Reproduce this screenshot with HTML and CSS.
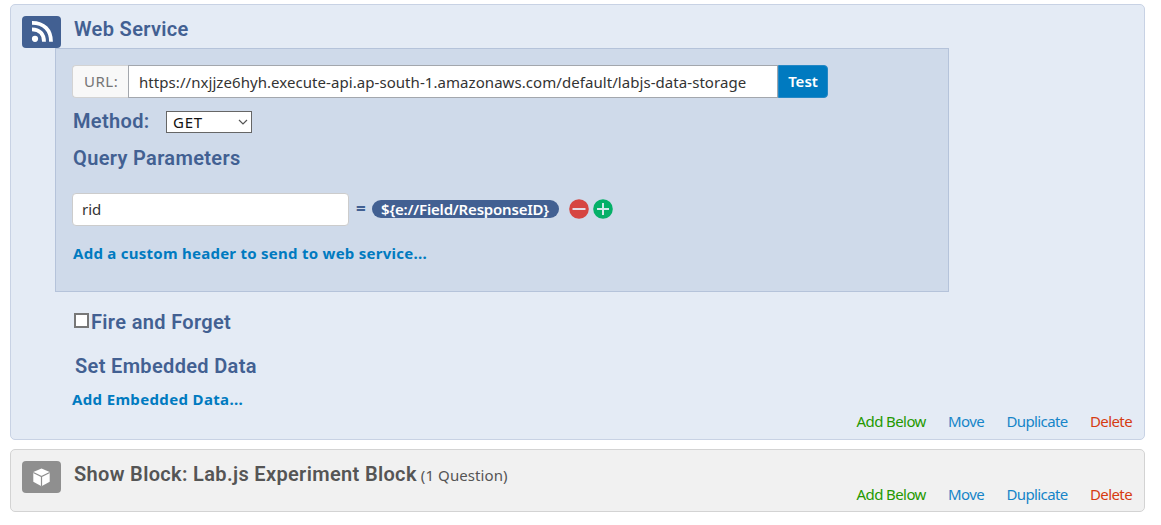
FILE: index.html
```html
<!DOCTYPE html>
<html lang="en">
<head>
<meta charset="utf-8">
<title>Survey Flow</title>
<link rel="stylesheet" href="styles.css">
</head>
<body>
<main class="flow">
  <section class="block service">
    <header class="block-head">
      <span class="tile"><svg width="39" height="32" viewBox="0 0 39 32" fill="none" stroke="#fff"><circle cx="13" cy="22.8" r="3.1" fill="#fff" stroke="none"/><path d="M10 13.4C17.5 13.4 22 18 22 25.8M10 6.9C22 6.9 29 14 29 25.8" stroke-width="3.8"/></svg></span>
      <h2 class="title t-service">Web Service</h2>
    </header>
    <div class="panel">
      <div class="url-row">
        <label class="url-label">URL:</label>
        <div class="url-field"><span class="url-text">https://nxjjze6hyh.execute-api.ap-south-1.amazonaws.com/default/labjs-data-storage</span></div>
        <button class="test">Test</button>
      </div>
      <div class="method-row">
        <h3 class="title t-method">Method:</h3>
        <div class="select"><span>GET</span><svg width="10" height="6" viewBox="0 0 10 6" fill="none" stroke="#555" stroke-width="1.2"><path d="M1 1l4 4 4-4"/></svg></div>
      </div>
      <h3 class="title t-query">Query Parameters</h3>
      <div class="param-row">
        <div class="param">rid</div>
        <span class="equals">=</span>
        <span class="pill"><span class="pill-text">${e://Field/ResponseID}</span></span>
        <svg class="minus" width="20" height="20" viewBox="0 0 20 20"><circle cx="10" cy="10" r="9.8" fill="#d64541"/><path d="M3.5 10h13" stroke="#e3dce5" stroke-width="2"/></svg>
        <svg class="plus" width="20" height="20" viewBox="0 0 20 20"><circle cx="10" cy="10" r="9.8" fill="#05b068"/><path d="M4 10h12M10 4v12" stroke="#d5e8ea" stroke-width="2"/></svg>
      </div>
      <a class="link l-header">Add a custom header to send to web service...</a>
    </div>
    <div class="fire-row"><span class="check"></span><h3 class="title t-fire">Fire and Forget</h3></div>
    <h3 class="title t-embed">Set Embedded Data</h3>
    <a class="link l-embed">Add Embedded Data...</a>
    <nav class="actions"><a class="add">Add Below</a><a class="move">Move</a><a class="dup">Duplicate</a><a class="del">Delete</a></nav>
  </section>
  <section class="block show">
    <header class="block-head">
      <span class="tile"><svg width="39" height="32" viewBox="0 0 39 32"><path d="M19.5 7.5l8.2 3.4v9.8l-8.2 4.5-8.2-4.5v-9.8z" fill="#fff"/><path d="M11.3 11.5l8.2 4 8.2-4M19.5 15.5v9.8" fill="none" stroke="#8f8f8f" stroke-width="1.2"/></svg></span>
      <h2 class="title t-show">Show Block: Lab.js Experiment Block</h2>
      <span class="count">(1 Question)</span>
    </header>
    <nav class="actions"><a class="add">Add Below</a><a class="move">Move</a><a class="dup">Duplicate</a><a class="del">Delete</a></nav>
  </section>
</main>
</body>
</html>
```
FILE: styles.css
```css
* { box-sizing: border-box; }
body { margin: 0; background: #fff; font-family: "Noto Sans", "Open Sans", sans-serif; font-size: 15px; color: #333; }
h2, h3 { margin: 0; }
.flow { padding: 4px 16px 0 10px; display: flex; flex-direction: column; gap: 9px; }
.block { border: 1px solid #c8d2e4; border-radius: 5px; }
.service { height: 436px; background: #e4ebf5; color: #426092; }
.show { height: 63px; background: #f1f1f1; border-color: #d3d3d3; color: #555; }
.block-head { display: flex; height: 43px; padding: 11px 0 0 11px; white-space: nowrap; }
.tile { width: 39px; height: 32px; margin-right: 13px; border-radius: 4px; background: #426092; overflow: hidden; flex: none; }
.tile svg { display: block; }
.show .tile { background: #8f8f8f; }
.title { font-family: Roboto, sans-serif; font-size: 20px; font-weight: 600; line-height: 26px; letter-spacing: .34px; white-space: nowrap; }
.panel { width: 894px; height: 244px; margin-left: 44px; padding: 16px 0 0 17px; background: #cfdaea; border: 1px solid #b5c3da; }
.url-row { display: flex; height: 33px; white-space: nowrap; }
.url-label { width: 56px; margin-left: -1px; padding-left: 11px; line-height: 31px; letter-spacing: .5px; color: #757575; background: #f8f8f8; border: 1px solid #d3d3d3; border-right: 0; border-radius: 4px 0 0 4px; }
.url-field { width: 650px; padding-left: 10px; line-height: 32px; letter-spacing: .06px; color: #333; background: #fff; border: 1px solid #a3a7ad; }
.test { width: 50px; padding: 0 0 1px; font: 600 15px "Noto Sans", sans-serif; color: #fff; background: #007ac0; border: 1px solid #2588c5; border-radius: 0 4px 4px 0; }
.method-row { display: flex; height: 43px; padding-top: 10px; }
.t-method { width: 93px; }
.select { display: flex; align-items: center; justify-content: space-between; width: 86px; height: 22px; margin-top: 3px; padding: 0 3px 0 6px; letter-spacing: .8px; color: #111; background: #fff; border: 1px solid #666; }
.t-query { padding-top: 4px; }
.param-row { display: flex; align-items: center; height: 33px; margin-top: 22px; margin-left: -1px; }
.param { width: 277px; height: 33px; padding-left: 9px; line-height: 31px; color: #333; background: #fff; border: 1px solid #ccc; border-radius: 4px; }
.equals { width: 23px; margin-top: -2px; padding-left: 7px; font-size: 17px; font-weight: 700; }
.pill { width: 187px; height: 18px; margin-top: -1px; padding-left: 9px; line-height: 18px; font-weight: 600; letter-spacing: -.2px; color: #fff; background: #426092; border-radius: 9px; white-space: nowrap; }
.minus { margin: -2px 4px 0 10px; }
.plus { margin-top: -2px; }
.link { display: block; font-size: 15px; font-weight: 700; line-height: 20px; color: #007ac0; white-space: nowrap; }
.l-header { margin-top: 17px; letter-spacing: .26px; }
.fire-row { display: flex; height: 26px; margin: 17px 0 0 63px; }
.check { width: 15px; height: 15px; margin: 4px 2px 0 0; background: #fff; border: 2px solid #777; }
.t-embed { margin: 18px 0 0 64px; }
.l-embed { margin: 10px 0 0 61px; letter-spacing: .35px; }
.actions { display: flex; justify-content: flex-end; gap: 22.3px; padding-right: 12px; font: 15px/20px "Noto Sans", sans-serif; letter-spacing: -.6px; }
.service .actions { margin-top: 2px; }
.show .actions { margin-top: -9px; }
.add { color: #259900; }
.move, .dup { color: #1685c8; }
.del { color: #d63b12; }
.count { margin-left: 4px; line-height: 28px; letter-spacing: .1px; }
```
